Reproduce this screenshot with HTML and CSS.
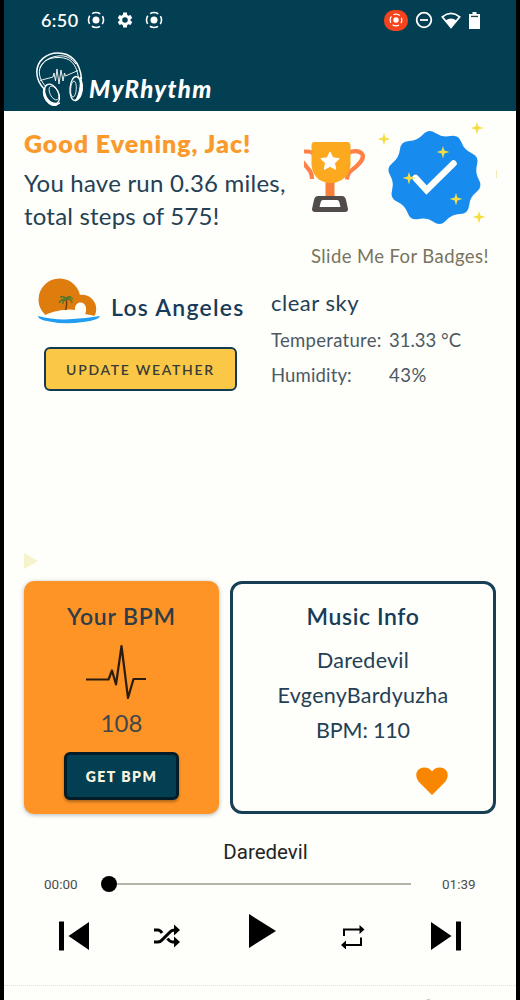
FILE: index.html
```
<!DOCTYPE html>
<html lang="en">
<head>
<meta charset="utf-8">
<title>MyRhythm</title>
<link rel="stylesheet" href="styles.css">
</head>
<body>
<div class="phone">
  <header class="header">
    <div class="status">
      <span class="clock">6:50</span>
      <svg class="s-rec" width="18" height="18" viewBox="0 0 18 18"><circle cx="9" cy="9" r="3.5" fill="#fff"/><circle class="ring" cx="9" cy="9" r="7.5"/></svg>
      <svg class="s-gear" width="18" height="18" viewBox="0 0 24 24"><path fill="#fff" d="M19.4 13a7.5 7.5 0 0 0 0-2l2.3-1.7-2.4-4-2.7 1.1a7 7 0 0 0-1.7-1L14.500 2h-5l-.4 3.300a7 7 0 0 0-1.700 1L4.700 5.300l-2.400 4L4.600 11a7.500 7.500 0 0 0 0 2l-2.300 1.700 2.400 4 2.700-1.100a7 7 0 0 0 1.700 1l.4 3.400h5l.4-3.400a7 7 0 0 0 1.700-1l2.700 1.100 2.400-4zM12 15.700a3.700 3.700 0 1 1 0-7.400 3.700 3.700 0 0 1 0 7.400z"/></svg>
      <svg class="s-rec2" width="18" height="18" viewBox="0 0 18 18"><circle cx="9" cy="9" r="3.500" fill="#fff"/><circle class="ring" cx="9" cy="9" r="7.500"/></svg>
      <span class="status-right">
        <span class="cast"><svg width="14" height="14" viewBox="0 0 18 18"><circle cx="9" cy="9" r="3.500" fill="#fff"/><circle class="ring" cx="9" cy="9" r="7.500"/></svg></span>
        <svg width="18" height="18" viewBox="0 0 18 18"><circle cx="9" cy="9" r="7.300" fill="none" stroke="#fff" stroke-width="1.800"/><path d="M5 9h8" stroke="#fff" stroke-width="1.800"/></svg>
        <svg class="wifi" width="20" height="17" viewBox="0 0 20 17"><path d="M1.300 4.800Q10-2.200 18.700 4.800L10 15.500z" fill="none" stroke="#fff" stroke-width="1.700"/><path d="M4.500 8.500Q10 4.500 15.500 8.500L10 16z" fill="#fff"/></svg>
        <svg width="11" height="17" viewBox="0 0 11 18" preserveAspectRatio="none"><path d="M3.500 0h4v2H11v16H0V2h3.500z" fill="#fff"/><path d="M2 4.700h7" stroke="#244" stroke-width="1.400"/></svg>
      </span>
    </div>
    <div class="brand">
      <svg width="48" height="56" viewBox="0 0 48 56" fill="none" stroke="#fff">
        <path d="M9 38C3 32 .8 26 .8 20 1 9 10 1 22 1S44 9 45.500 27" stroke-width="1.500"/>
        <path d="M10 35C4 28 3 23 3.500 18 5 10 12 5.500 22 5.500S40 9 42.500 26M4 16c4-8 10-11 18-12s13 2 18 8" stroke-width="1"/>
        <path d="M4 28.500L17 25l1-4 1.500 8 1.500-12 2 15 2-14 2 11 1.500-8 1 3L42 18.500" stroke-width=".9"/>
        <ellipse cx="16" cy="42" rx="6.500" ry="10.500" transform="rotate(-27 16 42)" stroke-width="1.300"/>
        <ellipse cx="18" cy="41" rx="4" ry="7.500" transform="rotate(-27 18 41)" stroke-width=".8"/>
        <path d="M8 36C8 46 14 53 24 51l-4 2.500C12 55 5 44 8 36z" fill="#fff"/>
        <ellipse cx="39.500" cy="36.500" rx="5.500" ry="12" transform="rotate(4 39.500 36.500)" stroke-width="1.300"/>
        <ellipse cx="37.500" cy="37" rx="2.800" ry="8" transform="rotate(4 37.500 37)" stroke-width=".8"/>
        <path d="M44 25C45 33 43.500 43 39 49c8-1 9.500-17 5-24z" fill="#fff"/>
      </svg>
      <span class="brand-name">MyRhythm</span>
    </div>
  </header>

  <section class="summary">
    <div class="greeting">
      <h1>Good Evening, Jac!</h1>
      <p><span class="fit-run">You have run 0.36 miles,</span><br><span class="fit-steps">total steps of 575!</span></p>
    </div>
    <div class="badges">
      <svg width="194" height="112" viewBox="304 119 194 112">
        <g fill="none" stroke="#ff8148" stroke-width="4.200"><path d="M302 151.500h6q3 0 5 2M301 160l9 11q2 3 2 8"/><path d="M347 154c5-4 13-4 15.500.5 2 4.500-3 9-8 13.500-5 4-7 5-7.500 11.500"/></g>
        <path d="M325.500 179h9v18h-9z" fill="#f6803a"/>
        <path d="M314 142h33q3.500 0 3.500 4v18c0 11-9 19-20 19s-19-8-19-19v-18q0-4 2.500-4z" fill="#fda920"/>
        <path d="M330 152l2.800 5.800 6.400.8-4.700 4.400 1.200 6.400-5.700-3.100-5.700 3.100 1.200-6.400-4.700-4.400 6.400-.8z" fill="#fff" stroke="#fff" stroke-linejoin="round"/>
        <path d="M318 196h24q3 0 4 4l2 9q0 3-3 3h-30q-3 0-3-3l2-9q1-4 4-4z" fill="#514b4b"/>
        <path d="M323 200h14q2 0 2.500 3l1 4h-21l1-4q.5-3 2.500-3z" fill="#fff"/>
        <path fill="#178bee" d="M422.950 134.600Q428.500 128.400 435.350 133.050Q442.200 137.700 450.350 135.950Q458.500 134.200 461.300 142.050Q464.100 149.900 471.700 153.250Q479.300 156.600 477 164.600Q474.700 172.600 478.900 179.800Q483.100 187 476.500 192.050Q469.900 197.100 469.100 205.400Q468.300 213.700 459.950 213.950Q451.600 214.200 446.050 220.450Q440.500 226.700 433.650 222Q426.800 217.300 418.650 219.050Q410.500 220.800 407.700 212.950Q404.900 205.100 397.300 201.750Q389.700 198.400 392 190.400Q394.300 182.400 390.100 175.200Q385.900 168 392.500 162.950Q399.100 157.900 399.900 149.600Q400.700 141.300 409.050 141.050Q417.400 140.800 422.950 134.600Z"/>
        <path d="M415.500 178l11 12 27-26.500" fill="none" stroke="#fffefa" stroke-width="6.500" stroke-linecap="round"/>
        <g fill="#f4dd42"><path id="spark" d="M384 133l1.400 4.600 5 1.400-5 1.400-1.400 5-1.400-5-5-1.400 5-1.400z"/><use href="#spark" x="93" y="-11"/><use href="#spark" x="59" y="13"/><use href="#spark" x="25" y="39"/><use href="#spark" x="72" y="60"/><use href="#spark" x="95" y="78"/></g>
        <path d="M496.500 170v8" stroke="#f4dda0" stroke-width=".7"/>
      </svg>
      <p class="slide-hint">Slide Me For Badges!</p>
    </div>
  </section>

  <section class="weather">
    <div class="place">
      <div class="city">
        <svg width="63" height="46" viewBox="0 0 63 46">
          <circle cx="21.500" cy="21.500" r="21" fill="#df7c0e"/>
          <circle cx="44" cy="31" r="14.200" fill="#df7c0e"/>
          <path d="M4 39q10-7 27-7.500 4 0 6 .5c-1-9 10-10 11-2 0 3 0 5-1 6q7 1 13 3l-1 7H5z" fill="#fefefa"/>
          <path d="M0 38q15 4 31 3.300T62 38q-1 4-17 6-20 3-39-1.500-6-2-6-4.500z" fill="#219df2"/>
          <path d="M27.500 32q2-6 .5-11" stroke="#6a3a12" stroke-width="1.400" fill="none"/>
          <path d="M21 25q2-4 7-4m-6-2q5-1 6 2 3-3 7 0m-7 0q6 0 6 4m-6-4q-4 2-3 5m3-6q2-2 5-1" stroke="#557727" stroke-width="1.500" fill="none"/>
        </svg>
        <h2>Los Angeles</h2>
      </div>
      <button class="btn-weather">UPDATE WEATHER</button>
    </div>
    <div class="conditions">
      <p class="sky">clear sky</p>
      <p class="row"><span class="label">Temperature:</span><span class="degrees">31.33 °C</span></p>
      <p class="row"><span class="label humidity">Humidity:</span><span class="percent">43%</span></p>
    </div>
  </section>

  <div class="marker"><svg width="14" height="16" viewBox="0 0 14 16"><path d="M0 0l14 8-14 8z" fill="#f5f3cb"/></svg></div>

  <section class="cards">
    <article class="card bpm">
      <h2>Your BPM</h2>
      <svg class="pulse" width="62" height="56" viewBox="0 0 62 56"><path d="M0 35.500h22.500l3.500-9 4 14L35.500 2 42 54l5.500-19H60" fill="none" stroke="#2b1c10" stroke-width="2.200" stroke-linejoin="round"/></svg>
      <p class="bpm-value">108</p>
      <button class="btn-bpm">GET BPM</button>
    </article>
    <article class="card music">
      <h2>Music Info</h2>
      <p class="song">Daredevil</p>
      <p class="artist">EvgenyBardyuzha</p>
      <p class="tempo">BPM: 110</p>
      <svg class="heart" width="32" height="28" viewBox="0 0 32 28"><path d="M16 28L3 15C-2 9 0 1 8 .5c4 0 6 1.500 8 4 2-2.500 4-4 8-4 8 .5 10 8.500 5 14.500z" fill="#f98600"/></svg>
    </article>
  </section>

  <section class="player">
    <p class="track">Daredevil</p>
    <div class="progress">
      <span class="time">00:00</span>
      <div class="bar"><span class="thumb"></span><span class="rail"></span></div>
      <span class="time">01:39</span>
    </div>
    <div class="controls">
      <svg width="30" height="30" viewBox="0 0 30 30"><path d="M0 .5h5v29H0zM30 1v28L9.500 15z"/></svg>
      <svg class="shuffle" width="28" height="24" viewBox="0 0 28 24"><path d="M1 6h4q2 0 4 3M1 18h4q2.500 0 4.500-2.500l7-7q2-2.500 5-2.500h2M14.500 14.500q2.500 3.500 5 3.500h4" fill="none" stroke="#000" stroke-width="3"/><path d="M21 .5L27 6l-6 5.500zM21 12.500l6 5.500-6 5.500z"/></svg>
      <svg class="play" width="27" height="34" viewBox="0 0 27 34"><path d="M0 0l27 17L0 34z"/></svg>
      <svg width="24" height="25" viewBox="0 0 24 25"><path d="M3 12V5.500h16M20 13.500V21H4" fill="none" stroke="#000" stroke-width="2"/><path d="M18.500 1l5 4.500-5 4.500zM5 16.500v9L0 21z"/></svg>
      <svg width="30" height="30" viewBox="0 0 30 30"><path d="M25 .5h5v29h-5zM0 1v28l20.500-14z"/></svg>
    </div>
  </section>
  <nav class="nav"><svg width="24" height="3" viewBox="0 0 24 3"><path d="M3 2q6-2 10 0M19 1v2" fill="none" stroke="#777" stroke-width="1"/></svg></nav>
</div>
</body>
</html>
```
FILE: styles.css
```
* { box-sizing: border-box; }
body { margin: 0; background: #000; font-family: Lato, "Open Sans", sans-serif; color: #244054; }
h1, h2, p { margin: 0; white-space: nowrap; }
svg { display: block; flex: none; overflow: hidden; }
button { display: flex; align-items: center; justify-content: center; padding: 0; font-family: inherit; white-space: nowrap; }
.phone { width: 512px; height: 1000px; margin: 0 4px; background: #fefefa; overflow: hidden; }

.header { height: 111px; background: #033f53; color: #fff; }
.status { display: flex; align-items: center; height: 40px; padding: 0 36px 0 37px; }
.clock { width: 37px; font-size: 18px; line-height: 40px; font-weight: 600; letter-spacing: .4px; }
.ring { fill: none; stroke: #fff; stroke-width: 1.600; stroke-dasharray: 8.600 3.180; stroke-dashoffset: 4.300; }
.s-rec { margin-left: 9px; }
.s-gear { margin-left: 11px; }
.s-rec2 { margin-left: 11px; }
.status-right { display: flex; align-items: center; gap: 8px; margin-left: auto; }
.cast { display: flex; align-items: center; justify-content: center; width: 24px; height: 21px; margin-right: -1px; border-radius: 10px; background: #f5441d; }
.brand { display: flex; height: 71px; padding: 12px 0 0 32px; }
.brand-name { margin: 22px 0 0 5px; font-size: 24px; line-height: 30px; font-weight: 900; font-style: italic; letter-spacing: 1.350px; }

.summary { display: flex; justify-content: space-between; height: 162px; padding: 8px 18px 0 20px; }
.greeting { padding-top: 9px; }
h1 { font-size: 25px; line-height: 30px; font-weight: 800; color: #fa9a2c; letter-spacing: .950px; }
.greeting p { margin-top: 9px; font-size: 24px; line-height: 32.500px; }
.fit-run { letter-spacing: .220px; }
.fit-steps { letter-spacing: .200px; }
.badges { width: 194px; }
.slide-hint { margin-top: 13px; padding-left: 7px; font-size: 18.500px; line-height: 24px; color: #77745f; letter-spacing: .400px; }

.weather { display: flex; height: 280px; padding-left: 34px; }
.place { width: 233px; }
.city { display: flex; gap: 10px; padding-top: 5px; }
h2 { font-size: 23px; line-height: 30px; font-weight: 600; color: #183c58; }
.city h2 { padding-top: 14px; letter-spacing: 1.250px; }
.btn-weather { width: 193px; height: 44px; margin: 23px 0 0 6px; border: 2.500px solid #123b50; border-radius: 6px; background: #fac846; color: #393c37; font-size: 14px; font-weight: 600; letter-spacing: 1.700px; }
.conditions { padding-top: 16px; }
.sky { font-size: 22px; line-height: 28px; letter-spacing: .500px; }
.row { display: flex; font-size: 18.500px; line-height: 35px; color: #4c5964; letter-spacing: .300px; }
.sky + .row { margin-top: 6px; }
.label { width: 118px; }
.humidity { letter-spacing: .150px; }
.degrees { letter-spacing: 0; }
.percent { letter-spacing: .500px; }

.marker { height: 28px; padding: 0 20px; }
.cards { display: flex; gap: 11px; height: 233px; padding: 0 20px; }
.card { display: flex; flex-direction: column; align-items: center; border-radius: 12px; }
.bpm { width: 195px; padding-top: 20px; border-radius: 10px; background: #fd9425; box-shadow: 0 1px 4px rgba(40, 50, 60, .35); }
.bpm h2 { color: #2e3d48; letter-spacing: .800px; }
.pulse { margin: 13px 0 0 -9px; }
.bpm-value { margin-top: 8px; font-size: 24px; line-height: 30px; color: #42484a; }
.btn-bpm { width: 115px; height: 48px; margin-top: 14px; border: 3px solid #031c27; border-radius: 6px; background: #033f53; box-shadow: 0 2px 3px rgba(0, 0, 0, .3); color: #f8f2dc; font-size: 14px; font-weight: 800; letter-spacing: 1.500px; }
.music { width: 266px; padding-top: 17px; border: 3px solid #193f56; }
.music h2 { margin-bottom: 12px; letter-spacing: .600px; }
.music p { font-size: 21.500px; line-height: 35px; }
.song { letter-spacing: .250px; }
.artist { letter-spacing: .250px; }
.tempo { letter-spacing: -.150px; }
.heart { margin: 19px 0 0 137px; }

.player { height: 171px; padding-top: 24px; color: #242424; font-family: Roboto, sans-serif; }
.track { padding-left: 11px; font-size: 20.500px; line-height: 28px; text-align: center; }
.progress { display: flex; align-items: center; height: 36px; padding: 0 40px; }
.time { width: 34px; font-size: 13.500px; color: #4c4c4c; }
.bar { display: flex; align-items: center; width: 310px; margin: 0 31px 0 23px; }
.thumb { width: 16px; height: 16px; border-radius: 50%; background: #000; }
.rail { flex: 1; height: 2.500px; background: #b5b4a9; }
.controls { display: flex; align-items: center; justify-content: space-between; height: 68px; padding: 0 55px; }
.shuffle { margin: 0 2px 0 -2px; }
.play { margin-bottom: 10px; }
.nav { height: 15px; padding: 13px 0 0 416px; border-top: 1px dotted #dddde2; }
```
